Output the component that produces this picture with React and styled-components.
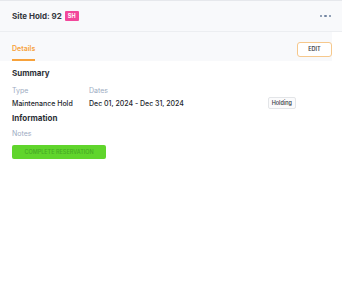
import React from 'react';
import styled, { createGlobalStyle } from 'styled-components';

const Global = createGlobalStyle`
  body {
    margin: 0;
    background: #ffffff;
    font-family: Inter, "Noto Sans", sans-serif;
    color: #2d3038;
  }
`;

const Header = styled.div`
  display: flex;
  align-items: center;
  justify-content: space-between;
  height: 32px;
  padding: 0 11px 0 12px;
  background: #f8f9fb;
  border-top: 1px solid #e6e8ec;
  border-bottom: 1px solid #eceef1;
  box-sizing: border-box;
`;

const Title = styled.div`
  display: flex;
  align-items: center;
  gap: 3px;
  font-size: 8px;
  font-weight: 700;
  color: #33363d;
`;

const Tag = styled.span`
  background: #f2489b;
  color: #fff;
  font-size: 5.5px;
  font-weight: 700;
  padding: 2px 3px;
  border-radius: 1px;
  line-height: 6px;
`;

const Dots = styled.div`
  display: flex;
  gap: 2px;
  span {
    width: 2.5px;
    height: 2.5px;
    border-radius: 50%;
    background: #7183a0;
  }
`;

const Tabs = styled.div`
  display: flex;
  align-items: flex-end;
  justify-content: space-between;
  height: 29px;
  padding: 0 0 0 12px;
  background: #f8f9fb;
  margin-right: 10px;
`;

const Tab = styled.div`
  font-size: 7px;
  font-weight: 600;
  color: #f7a23b;
  padding-bottom: 6px;
  border-bottom: 2px solid #f7a23b;
`;

const EditButton = styled.button`
  align-self: center;
  margin-top: 5px;
  width: 35px;
  height: 15px;
  background: #fff;
  border: 1px solid #f6c88c;
  border-radius: 3px;
  font-family: Inter, sans-serif;
  font-size: 5.5px;
  font-weight: 600;
  color: #3d4048;
  padding: 0;
`;

const Content = styled.div`
  padding: 7px 12px 0;
`;

const SectionTitle = styled.div`
  font-size: 8px;
  font-weight: 700;
  color: #2c2f36;
  margin-bottom: ${p => p.$gap || 8}px;
`;

const Grid = styled.div`
  display: grid;
  grid-template-columns: 77px 1fr auto;
  row-gap: 2px;
  align-items: center;
  margin-bottom: 4px;
  padding-right: 34px;
`;

const Label = styled.div`
  font-size: 7px;
  color: #9dabc2;
`;

const Value = styled.div`
  font-size: 7px;
  font-weight: 500;
  color: #24272d;
`;

const Status = styled.span`
  font-size: 5.5px;
  font-weight: 500;
  color: #33363d;
  border: 1px solid #e3e5e8;
  border-radius: 2px;
  padding: 2px 3px;
  background: #fbfbfc;
`;

const Complete = styled.button`
  margin-top: 6px;
  width: 94px;
  height: 14px;
  background: #60d52c;
  border: none;
  border-radius: 2px;
  color: #46a924;
  font-family: Inter, sans-serif;
  font-size: 5.5px;
  font-weight: 500;
  padding: 0;
`;

export default function App() {
  return (
    <>
      <Global />
      <Header>
        <Title>
          Site Hold: 92 <Tag>SH</Tag>
        </Title>
        <Dots>
          <span />
          <span />
          <span />
        </Dots>
      </Header>
      <Tabs>
        <Tab>Details</Tab>
        <EditButton>EDIT</EditButton>
      </Tabs>
      <Content>
        <SectionTitle>Summary</SectionTitle>
        <Grid>
          <Label>Type</Label>
          <Label>Dates</Label>
          <span />
          <Value>Maintenance Hold</Value>
          <Value>Dec 01, 2024 - Dec 31, 2024</Value>
          <Status>Holding</Status>
        </Grid>
        <SectionTitle $gap={6}>Information</SectionTitle>
        <Label>Notes</Label>
        <Complete>COMPLETE RESERVATION</Complete>
      </Content>
    </>
  );
}
